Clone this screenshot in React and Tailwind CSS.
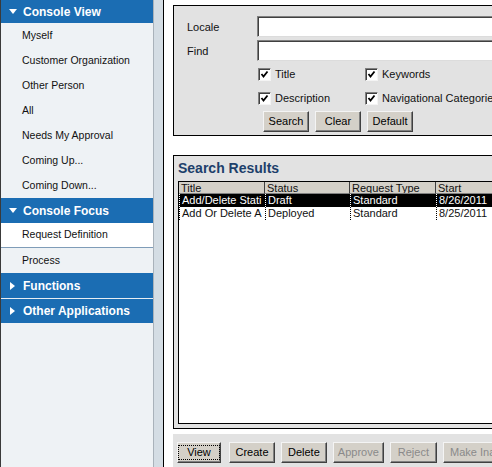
import React from 'react';

const Tri = ({ open }) =>
  open ? (
    <svg width="8" height="5" viewBox="0 0 8 5" className="shrink-0">
      <polygon points="0,0 8,0 4,5" fill="#fff" />
    </svg>
  ) : (
    <svg width="5" height="8" viewBox="0 0 5 8" className="shrink-0">
      <polygon points="0,0 5,4 0,8" fill="#fff" />
    </svg>
  );

const Header = ({ label, open, className = '' }) => (
  <div className={`flex items-center bg-[#1b6db3] text-white font-bold text-[12px] ${className}`}>
    <div className="w-[22px] flex justify-center pl-[1px]">
      <Tri open={open} />
    </div>
    <span>{label}</span>
  </div>
);

const Item = ({ label, selected }) => (
  <div
    className={`h-[25px] flex items-center pl-[21px] text-[10.5px] text-[#111] ${
      selected ? 'bg-white border-b border-[#7f9cb8]' : ''
    }`}
  >
    {label}
  </div>
);

const btn =
  'h-[21px] px-[6px] flex items-center justify-center text-[11px] bg-[#d4d0c8] border border-t-[#f4f4f4] border-l-[#f4f4f4] border-r-[#404040] border-b-[#404040] shadow-[inset_-1px_-1px_0_#808080]';

const Check = ({ label }) => (
  <div className="flex items-center gap-[4px] text-[11px] text-[#111]">
    <div className="w-[13px] h-[13px] bg-white border border-t-[#808080] border-l-[#808080] border-r-[#f4f4f4] border-b-[#f4f4f4] shadow-[inset_1px_1px_0_#404040] flex items-center justify-center">
      <svg width="9" height="9" viewBox="0 0 9 9">
        <polyline points="1.5,4 3.5,6.5 7.5,1.5" fill="none" stroke="#000" strokeWidth="1.8" />
      </svg>
    </div>
    <span className="whitespace-nowrap">{label}</span>
  </div>
);

const Input = () => (
  <div className="h-[21px] w-[260px] bg-white border border-t-[#808080] border-l-[#808080] border-r-[#f4f4f4] border-b-[#dcdcdc] shadow-[inset_1px_1px_0_#404040]" />
);

const cols = [
  { label: 'Title', w: 'w-[86px]' },
  { label: 'Status', w: 'w-[85px]' },
  { label: 'Request Type', w: 'w-[86px]' },
  { label: 'Start', w: 'w-[80px]' },
];

const rows = [
  ['Add/Delete Stati', 'Draft', 'Standard', '8/26/2011'],
  ['Add Or Delete A', 'Deployed', 'Standard', '8/25/2011'],
];

export default function App() {
  return (
    <div className="w-[492px] h-[467px] overflow-hidden flex bg-white font-['Liberation_Sans',Arial,sans-serif]">
      {/* sidebar */}
      <aside className="w-[154px] shrink-0 bg-[#eef2f5] border-l border-[#3a3a3a] border-r border-r-[#a9b2ba] flex flex-col">
        <Header label="Console View" open className="h-[23px]" />
        <Item label="Myself" />
        <Item label="Customer Organization" />
        <Item label="Other Person" />
        <Item label="All" />
        <Item label="Needs My Approval" />
        <Item label="Coming Up..." />
        <Item label="Coming Down..." />
        <Header label="Console Focus" open className="h-[25px]" />
        <Item label="Request Definition" selected />
        <Item label="Process" />
        <Header label="Functions" className="h-[25px]" />
        <Header label="Other Applications" className="h-[25px] border-t border-[#e8eef3]" />
      </aside>
      <div className="w-[10px] shrink-0 bg-[#d4dde4] border-r border-black" />

      {/* main */}
      <main className="flex-1 pl-[9px] pt-[5px] flex flex-col">
        {/* search panel */}
        <section className="w-[340px] h-[131px] shrink-0 bg-[#e2e2e2] border border-black pt-[10px] pl-[13px]">
          <div className="flex items-center h-[21px]">
            <span className="w-[71px] text-[11px] text-[#111] pt-[2px]">Locale</span>
            <Input />
          </div>
          <div className="flex items-center h-[21px] mt-[3px]">
            <span className="w-[71px] text-[11px] text-[#111] pt-[2px]">Find</span>
            <Input />
          </div>
          <div className="flex items-center h-[13px] mt-[7px] pl-[71px]">
            <div className="w-[107px]"><Check label="Title" /></div>
            <Check label="Keywords" />
          </div>
          <div className="flex items-center h-[13px] mt-[11px] pl-[71px]">
            <div className="w-[107px]"><Check label="Description" /></div>
            <Check label="Navigational Categories" />
          </div>
          <div className="flex items-center gap-[6px] mt-[6px] pl-[76px]">
            <div className={`${btn} w-[46px]`}>Search</div>
            <div className={`${btn} w-[46px]`}>Clear</div>
            <div className={`${btn} w-[46px]`}>Default</div>
          </div>
        </section>

        {/* results panel */}
        <section className="w-[340px] h-[274px] shrink-0 mt-[19px] bg-[#e2e2e2] border border-black px-[4px] flex flex-col">
          <div className="h-[25px] flex items-end pb-[6px] text-[14px] font-bold text-[#1d3f6b] leading-none">Search Results</div>
          <div className="flex-1 mb-[4px] bg-white border border-black">
            <div className="flex h-[12px] text-[11px] leading-[13px] text-[#111]">
              {cols.map((c) => (
                <div
                  key={c.label}
                  className={`${c.w} shrink-0 bg-[#d4d0c8] border-r border-[#404040] border-b border-b-[#808080] pl-[2px] overflow-hidden whitespace-nowrap`}
                >
                  {c.label}
                </div>
              ))}
            </div>
            {rows.map((r, i) => (
              <div
                key={i}
                className={`flex h-[13px] text-[11px] leading-[13px] ${i === 0 ? 'bg-black text-white' : 'text-[#111]'}`}
              >
                {r.map((v, j) => (
                  <div
                    key={j}
                    className={`${cols[j].w} shrink-0 pl-[2px] overflow-hidden whitespace-nowrap border-l border-dotted ${
                      i === 0 ? 'border-white' : 'border-black'
                    }`}
                  >
                    {v}
                  </div>
                ))}
              </div>
            ))}
          </div>
        </section>

        {/* button bar */}
        <section className="w-[340px] flex-1 mt-[5px] bg-[#e2e2e2] pl-[4px] pt-[8px] flex gap-[6px]">
          <div className={`${btn} w-[44px] mr-[2px] border-black`}>
            <span className="border border-dotted border-black px-[8px] leading-[13px]">View</span>
          </div>
          <div className={`${btn} w-[46px]`}>Create</div>
          <div className={`${btn} w-[46px]`}>Delete</div>
          <div className={`${btn} w-[51px] text-[#8a8a8a]`}>Approve</div>
          <div className={`${btn} w-[52px] text-[#8a8a8a]`}>Reject</div>
          <div className={`${btn} w-[70px] text-[#8a8a8a] justify-start whitespace-nowrap`}>Make Inactive</div>
        </section>
      </main>
    </div>
  );
}
